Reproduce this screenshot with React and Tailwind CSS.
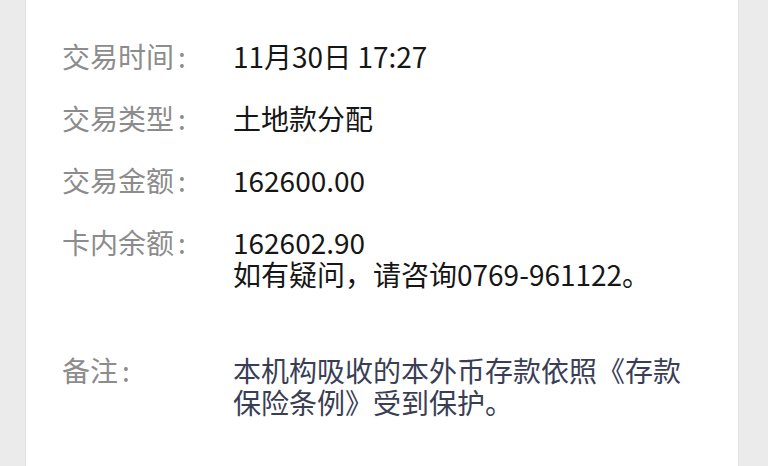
export default function App() {
  const rows = [
    { label: "交易时间", value: ["11月30日 17:27"] },
    { label: "交易类型", value: ["土地款分配"] },
    { label: "交易金额", value: ["162600.00"] },
    { label: "卡内余额", value: ["162602.90", "如有疑问，请咨询0769-961122。"] },
  ];
  return (
    <div className="w-[768px] h-[466px] bg-[#ebebeb] flex overflow-hidden font-['Noto_Sans_CJK_SC','Noto_Sans',sans-serif]">
      <div className="ml-[25px] w-[714px] h-full bg-white border-x border-[#e2e2e2] pl-[36px] pt-[40px] flex flex-col">
        {rows.map((r, i) => (
          <div key={i} className={`flex text-[28px] leading-[32px] ${i > 0 ? "mt-[30px]" : ""}`}>
            <div className="w-[171px] shrink-0 text-[#8c8c8c]">
              {r.label}<span className="ml-[4px]">:</span>
            </div>
            <div className="text-[#161616] flex flex-col">
              {r.value.map((v, j) => (
                <span key={j}>{v}</span>
              ))}
            </div>
          </div>
        ))}
        <div className="flex text-[28px] leading-[32px] mt-[64px]">
          <div className="w-[171px] shrink-0 text-[#8c8c8c]">
            备注<span className="ml-[4px]">:</span>
          </div>
          <div className="text-[#3a3e55]">
            本机构吸收的本外币存款依照《存款
            <br />
            保险条例》受到保护。
          </div>
        </div>
      </div>
    </div>
  );
}
